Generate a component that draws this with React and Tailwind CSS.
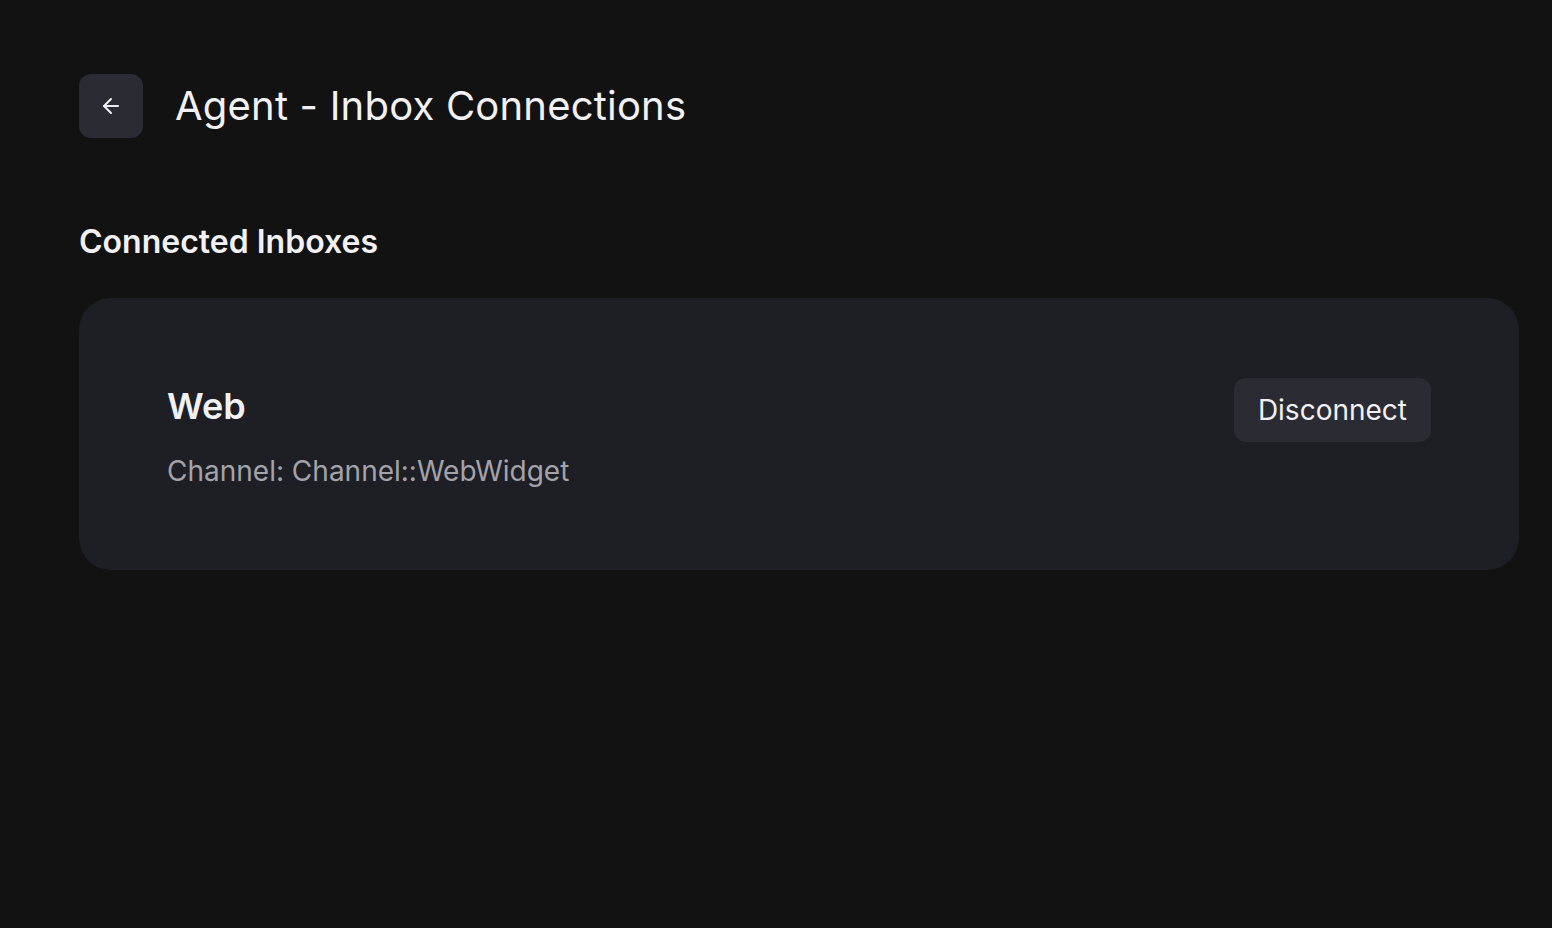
import React from "react";

export default function App() {
  return (
    <div className="min-h-[928px] w-full bg-[#121212] pl-[79px] pr-[33px] pt-[74px] text-[#f1f1f3]" style={{ fontFamily: "Inter, 'Noto Sans', sans-serif" }}>
      <div className="flex items-center gap-[32px]">
        <button className="flex h-16 w-16 items-center justify-center rounded-[12px] bg-[#2b2c33]">
          <svg width="24" height="24" viewBox="0 0 24 24" fill="none" stroke="#f1f1f3" strokeWidth="2" strokeLinecap="round" strokeLinejoin="round">
            <path d="M12 19l-7-7 7-7" />
            <path d="M19 12H5" />
          </svg>
        </button>
        <h1 className="text-[40px] font-normal leading-none tracking-[0.005em]">Agent - Inbox Connections</h1>
      </div>

      <h2 className="mt-[84px] text-[32px] font-semibold leading-[40px]">Connected Inboxes</h2>

      <div className="mt-[36px] flex items-start justify-between rounded-[32px] bg-[#1e1f24] px-[88px] pt-[80px] pb-[81px]">
        <div className="flex flex-col">
          <div className="pt-[8px] text-[36px] font-semibold leading-[40px]">Web</div>
          <div className="mt-[27px] text-[28px] leading-[36px] text-[#a3a3ab]">Channel: Channel::WebWidget</div>
        </div>
        <button className="h-16 rounded-[12px] bg-[#2b2c33] px-6 text-[28px] leading-none text-[#f1f1f3]">Disconnect</button>
      </div>
    </div>
  );
}
